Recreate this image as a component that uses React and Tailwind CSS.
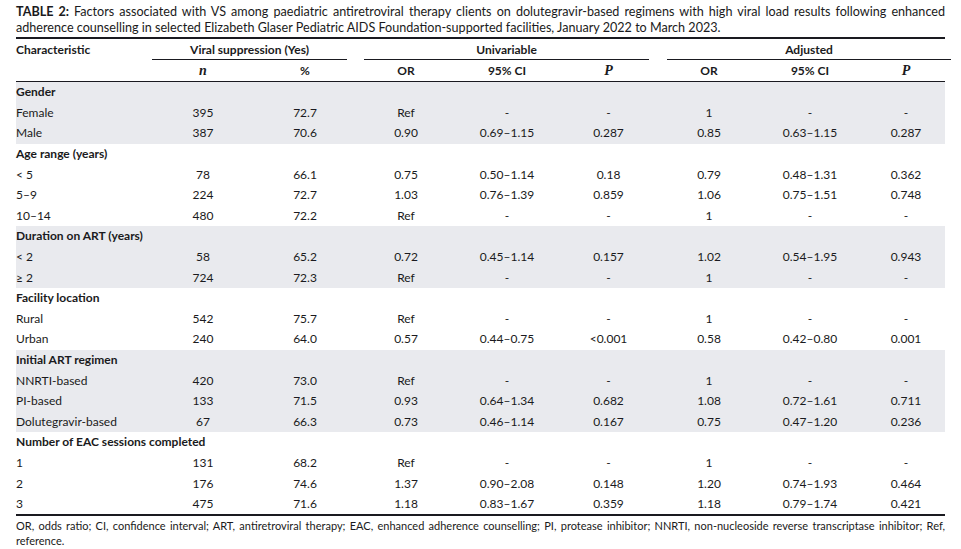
const cols = "grid grid-cols-[136px_102px_102px_100px_102px_101px_100px_102px_90px]";

const sections = [
  {
    title: "Gender",
    shaded: true,
    rows: [
      ["Female", "395", "72.7", "Ref", "-", "-", "1", "-", "-"],
      ["Male", "387", "70.6", "0.90", "0.69–1.15", "0.287", "0.85", "0.63–1.15", "0.287"],
    ],
  },
  {
    title: "Age range (years)",
    rows: [
      ["< 5", "78", "66.1", "0.75", "0.50–1.14", "0.18", "0.79", "0.48–1.31", "0.362"],
      ["5–9", "224", "72.7", "1.03", "0.76–1.39", "0.859", "1.06", "0.75–1.51", "0.748"],
      ["10–14", "480", "72.2", "Ref", "-", "-", "1", "-", "-"],
    ],
  },
  {
    title: "Duration on ART (years)",
    shaded: true,
    rows: [
      ["< 2", "58", "65.2", "0.72", "0.45–1.14", "0.157", "1.02", "0.54–1.95", "0.943"],
      ["≥ 2", "724", "72.3", "Ref", "-", "-", "1", "-", "-"],
    ],
  },
  {
    title: "Facility location",
    rows: [
      ["Rural", "542", "75.7", "Ref", "-", "-", "1", "-", "-"],
      ["Urban", "240", "64.0", "0.57", "0.44–0.75", "<0.001", "0.58", "0.42–0.80", "0.001"],
    ],
  },
  {
    title: "Initial ART regimen",
    shaded: true,
    rows: [
      ["NNRTI-based", "420", "73.0", "Ref", "-", "-", "1", "-", "-"],
      ["PI-based", "133", "71.5", "0.93", "0.64–1.34", "0.682", "1.08", "0.72–1.61", "0.711"],
      ["Dolutegravir-based", "67", "66.3", "0.73", "0.46–1.14", "0.167", "0.75", "0.47–1.20", "0.236"],
    ],
  },
  {
    title: "Number of EAC sessions completed",
    rows: [
      ["1", "131", "68.2", "Ref", "-", "-", "1", "-", "-"],
      ["2", "176", "74.6", "1.37", "0.90–2.08", "0.148", "1.20", "0.74–1.93", "0.464"],
      ["3", "475", "71.6", "1.18", "0.83–1.67", "0.359", "1.18", "0.79–1.74", "0.421"],
    ],
  },
];

const Row = ({ cells }) => (
  <div className={`${cols} h-[20.6px] items-center`}>
    {cells.map((c, i) => (
      <div key={i} className={i === 0 ? "text-left" : "text-center"}>{c}</div>
    ))}
  </div>
);

export default function App() {
  return (
    <div className="w-[961px] h-[549px] bg-white px-[16px] text-[#1a1a20] font-['Lato','Liberation_Sans',sans-serif]">
      {/* caption */}
      <div className="pt-[4px] text-[12.6px] leading-[16px]">
        <div className="text-justify [text-align-last:justify]">
          <span className="font-bold">TABLE 2:</span> Factors associated with VS among paediatric antiretroviral therapy clients on dolutegravir-based regimens with high viral load results following enhanced
        </div>
        <div>
          adherence counselling in selected Elizabeth Glaser Pediatric AIDS Foundation-supported facilities, January 2022 to March 2023.
        </div>
      </div>

      <div className="mt-[1px] border-t-[2px] border-[#1a1a20] text-[12px]">
        {/* header row 1 */}
        <div className={`${cols} h-[21px] font-bold`}>
          <div className="pt-[2px]">Characteristic</div>
          <div className="col-span-2 mr-[9px] border-b border-[#1a1a20] pt-[2px] text-center">Viral suppression (Yes)</div>
          <div className="col-span-3 ml-[8px] mr-[10px] border-b border-[#1a1a20] pt-[2px] text-center">Univariable</div>
          <div className="col-span-3 ml-[8px] border-b border-[#1a1a20] pt-[2px] text-center">Adjusted</div>
        </div>
        {/* header row 2 */}
        <div className={`${cols} h-[22px] items-center border-b-[1.5px] border-[#1a1a20] font-bold`}>
          <div></div>
          <div className="text-center font-['Liberation_Serif',serif] italic text-[14px]">n</div>
          <div className="text-center">%</div>
          <div className="text-center">OR</div>
          <div className="text-center">95% CI</div>
          <div className="text-center font-['Liberation_Serif',serif] italic text-[14px]">P</div>
          <div className="text-center">OR</div>
          <div className="text-center">95% CI</div>
          <div className="text-center font-['Liberation_Serif',serif] italic text-[14px]">P</div>
        </div>

        {sections.map((s) => (
          <div key={s.title} className={s.shaded ? "bg-[#e9eaee]" : ""}>
            <div className="h-[20.6px] flex items-center font-bold">{s.title}</div>
            {s.rows.map((r) => (
              <Row key={r[0]} cells={r} />
            ))}
          </div>
        ))}
      </div>

      <div className="border-t-[2px] border-[#1a1a20] pt-[2px] text-[11px] leading-[15px]">
        <div className="text-justify [text-align-last:justify]">
          OR, odds ratio; CI, confidence interval; ART, antiretroviral therapy; EAC, enhanced adherence counselling; PI, protease inhibitor; NNRTI, non-nucleoside reverse transcriptase inhibitor; Ref,
        </div>
        <div>reference.</div>
      </div>
    </div>
  );
}
